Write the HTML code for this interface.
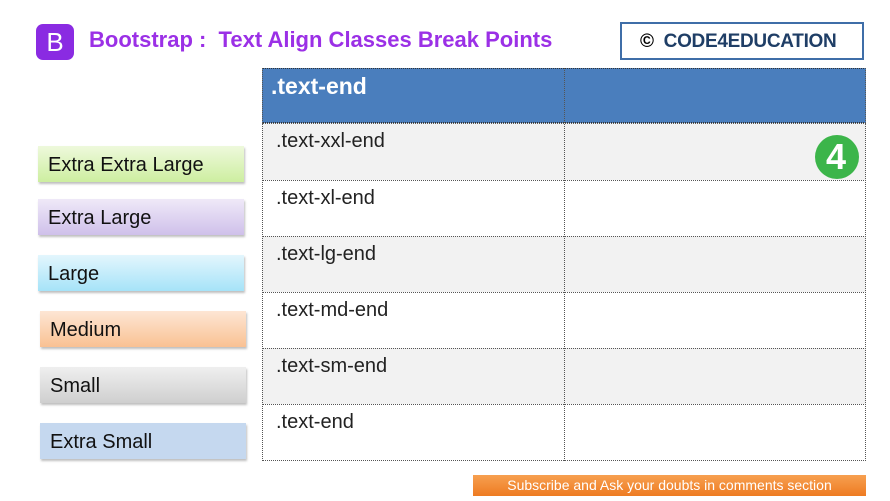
<!DOCTYPE html>
<html><head><style>
body{margin:0;width:890px;height:501px;background:#fff;position:relative;overflow:hidden;font-family:"Liberation Sans",sans-serif}
.a{position:absolute}
.lbl{position:absolute;left:38px;width:206px;height:36px;box-shadow:1px 2px 2px rgba(0,0,0,.25);font-size:20px;color:#111;line-height:38px;padding-left:10px;box-sizing:border-box}
.row{position:absolute;left:262px;width:604px;border-top:1px dotted #555;box-sizing:border-box;font-size:20px;color:#222}
.row span{position:absolute;left:14px;top:6px}
</style></head><body>
<div class="a" style="left:36px;top:24px;width:38px;height:36px;background:#8a2be2;border-radius:7px;color:#fff;font-size:26px;text-align:center;line-height:36px">B</div>
<div class="a" style="left:89px;top:27px;font-size:22px;font-weight:bold;color:#9b30e6;white-space:nowrap">Bootstrap : &nbsp;Text Align Classes Break Points</div>
<div class="a" style="left:620px;top:22px;width:244px;height:38px;border:2px solid #3f6ea8;box-sizing:border-box;font-size:19px;font-weight:bold;color:#1f3e66;line-height:36px;padding-left:18px;white-space:nowrap;letter-spacing:-0.3px"><span style="color:#000">©</span>&nbsp; CODE4EDUCATION</div>
<div class="a" style="left:262px;top:68px;width:604px;height:55px;background:#4a7ebd;border:1px dotted #333;box-sizing:border-box"></div>
<div class="a" style="left:271px;top:73px;font-size:23px;font-weight:bold;color:#fff">.text-end</div>
<div class="row" style="top:123px;height:57px;background:#f2f2f2"><span>.text-xxl-end</span></div>
<div class="row" style="top:180px;height:56px;background:#fff"><span>.text-xl-end</span></div>
<div class="row" style="top:236px;height:56px;background:#f2f2f2"><span>.text-lg-end</span></div>
<div class="row" style="top:292px;height:56px;background:#fff"><span>.text-md-end</span></div>
<div class="row" style="top:348px;height:56px;background:#f2f2f2"><span>.text-sm-end</span></div>
<div class="row" style="top:404px;height:57px;background:#fff;border-bottom:1px dotted #555"><span>.text-end</span></div>
<div class="a" style="left:262px;top:68px;width:0;height:393px;border-left:1px dotted #555"></div>
<div class="a" style="left:564px;top:68px;width:0;height:393px;border-left:1px dotted #555"></div>
<div class="a" style="left:865px;top:68px;width:0;height:393px;border-left:1px dotted #555"></div>
<div class="a" style="left:815px;top:135px;width:44px;height:44px;border-radius:50%;background:#3cb54a"></div>
<div class="a" style="left:826px;top:138px;color:#fff;font-size:36px;font-weight:bold;line-height:38px">4</div>
<div class="lbl" style="top:146px;background:linear-gradient(#eef9dc,#cdeea0)">Extra Extra Large</div>
<div class="lbl" style="top:199px;background:linear-gradient(#efe9f8,#cfc0ea)">Extra Large</div>
<div class="lbl" style="top:255px;background:linear-gradient(#e3f6fd,#a6e3f8)">Large</div>
<div class="lbl" style="top:311px;left:40px;background:linear-gradient(#fde6d4,#f9c193)">Medium</div>
<div class="lbl" style="top:367px;left:40px;background:linear-gradient(#efefef,#cfcfcf)">Small</div>
<div class="lbl" style="top:423px;left:40px;background:#c5d8ef">Extra Small</div>
<div class="a" style="left:473px;top:475px;width:393px;height:21px;background:linear-gradient(#f7a050,#ee7b22);color:#fff;font-size:14px;line-height:21px;text-align:center">Subscribe and Ask your doubts in comments section</div>
</body></html>
